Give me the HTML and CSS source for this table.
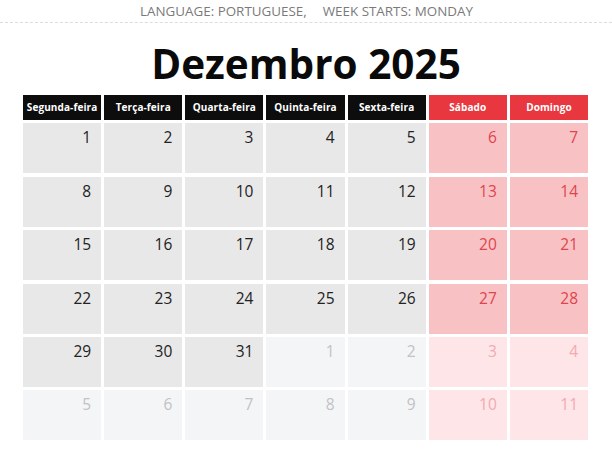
FILE: index.html
```html
<!DOCTYPE html>
<html lang="pt">
<head>
<meta charset="utf-8">
<title>Dezembro 2025</title>
<link rel="stylesheet" href="styles.css">
</head>
<body>
<div class="page">
  <div class="meta"><span>LANGUAGE: PORTUGUESE,</span><span>WEEK STARTS: MONDAY</span></div>
  <h1 class="title">Dezembro 2025</h1>
  <div class="cal">
    <div class="hd">Segunda-feira</div>
    <div class="hd">Terça-feira</div>
    <div class="hd">Quarta-feira</div>
    <div class="hd">Quinta-feira</div>
    <div class="hd">Sexta-feira</div>
    <div class="hd we">Sábado</div>
    <div class="hd we">Domingo</div>

    <div class="d">1</div><div class="d">2</div><div class="d">3</div><div class="d">4</div><div class="d">5</div><div class="d we">6</div><div class="d we">7</div>
    <div class="d">8</div><div class="d">9</div><div class="d">10</div><div class="d">11</div><div class="d">12</div><div class="d we">13</div><div class="d we">14</div>
    <div class="d">15</div><div class="d">16</div><div class="d">17</div><div class="d">18</div><div class="d">19</div><div class="d we">20</div><div class="d we">21</div>
    <div class="d">22</div><div class="d">23</div><div class="d">24</div><div class="d">25</div><div class="d">26</div><div class="d we">27</div><div class="d we">28</div>
    <div class="d">29</div><div class="d">30</div><div class="d">31</div><div class="d out">1</div><div class="d out">2</div><div class="d we out">3</div><div class="d we out">4</div>
    <div class="d out">5</div><div class="d out">6</div><div class="d out">7</div><div class="d out">8</div><div class="d out">9</div><div class="d we out">10</div><div class="d we out">11</div>
  </div>
</div>
</body>
</html>
```

FILE: styles.css
```css
html, body {
  margin: 0;
  padding: 0;
  background: #ffffff;
}
body {
  font-family: "Open Sans", "DejaVu Sans", sans-serif;
}
.page {
  width: 612px;
  height: 469px;
  overflow: hidden;
}
.meta {
  display: flex;
  justify-content: center;
  gap: 16px;
  height: 22px;
  line-height: 22px;
  font-size: 13.4px;
  color: #7a7a7a;
  border-bottom: 1px dashed #dcdcdc;
  padding-left: 1px;
}
.title {
  margin: 0;
  padding-top: 16px;
  height: 56px;
  line-height: 50px;
  text-align: center;
  font-size: 40.5px;
  font-weight: 700;
  color: #0a0a0a;
  letter-spacing: 0;
}
.cal {
  display: grid;
  grid-template-columns: repeat(7, 1fr);
  grid-template-rows: 25px repeat(6, 50px);
  column-gap: 3px;
  row-gap: 3.4px;
  margin: 0 24px 0 23px;
}
.hd {
  background: #0d0d0d;
  color: #ffffff;
  font-size: 10px;
  font-weight: 700;
  text-align: center;
  line-height: 25px;
  white-space: nowrap;
  letter-spacing: 0.1px;
}
.hd.we {
  background: #e8373e;
}
.d {
  background: #e8e8e8;
  color: #222222;
  font-size: 15.5px;
  text-align: right;
  padding: 4px 10px 0 0;
  line-height: 20px;
}
.d.we {
  background: #f8c2c5;
  color: #e0444c;
}
.d.out {
  background: #f4f5f7;
  color: #c2c2c4;
}
.d.we.out {
  background: #fde5e8;
  color: #f2aab2;
}
```
